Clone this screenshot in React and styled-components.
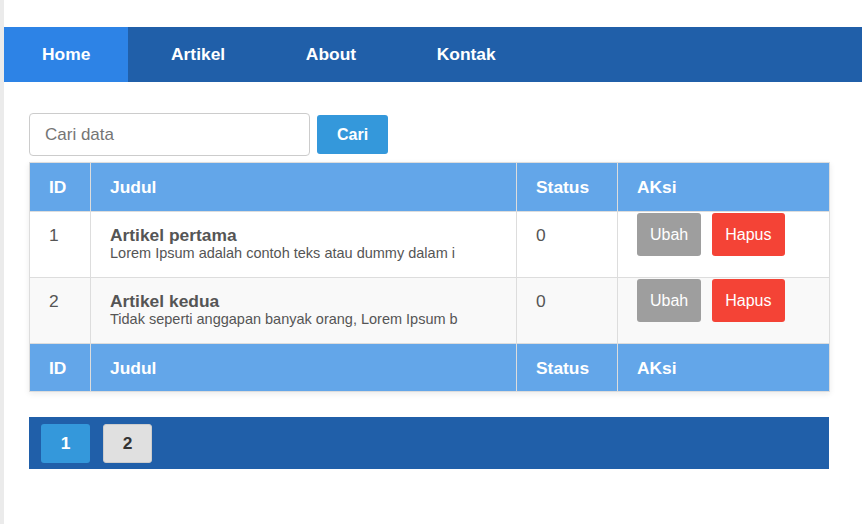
import React from "react";
import styled, { createGlobalStyle } from "styled-components";

const GlobalStyle = createGlobalStyle`
  html, body { margin: 0; padding: 0; background: #ffffff; }
  body { font-family: "Liberation Sans", Arial, sans-serif; }
  * { box-sizing: border-box; }
`;

const Page = styled.div`
  min-height: 524px;
  border-left: 4px solid #ebebeb;
  padding-top: 27px;
  background: #ffffff;
`;

const Nav = styled.nav`
  display: flex;
  gap: 4.7px;
  height: 55px;
  background: #205fa9;
`;

const NavLink = styled.a`
  display: flex;
  align-items: center;
  padding: 0 38px;
  color: #ffffff;
  font-weight: 700;
  font-size: 17.4px;
  text-decoration: none;
  background: ${(p) => (p.$active ? "#2d83e6" : "transparent")};
`;

const Content = styled.main`
  width: 825px;
  padding: 31px 0 0 25px;
`;

const SearchRow = styled.form`
  display: flex;
  align-items: center;
  gap: 7px;
  margin-bottom: 6px;
`;

const SearchInput = styled.input`
  width: 281px;
  height: 43px;
  padding: 0 15px;
  border: 1px solid #cccccc;
  border-radius: 4px;
  font-family: inherit;
  font-size: 17px;
  color: #333;
  outline: none;
  &::placeholder { color: #757575; }
`;

const SearchButton = styled.button`
  height: 39px;
  padding: 0 20px;
  border: none;
  border-radius: 3px;
  background: #3498db;
  color: #ffffff;
  font-family: inherit;
  font-weight: 700;
  font-size: 16px;
`;

const Table = styled.table`
  width: 800px;
  border-collapse: collapse;
  table-layout: fixed;
  border: 1px solid #dddddd;
  box-shadow: 0 2px 6px rgba(0, 0, 0, 0.08);
`;

const HeadCell = styled.th`
  width: ${(p) => p.$w}px;
  height: ${(p) => p.$h}px;
  padding: 0 19px;
  background: #63a6e9;
  color: #ffffff;
  font-size: 17.4px;
  font-weight: 700;
  line-height: 20px;
  text-align: left;
  vertical-align: middle;
  border: 1px solid #dddddd;
`;

const Row = styled.tr`
  background: ${(p) => (p.$striped ? "#f9f9f9" : "#ffffff")};
`;

const Cell = styled.td`
  padding: ${(p) => (p.$actions ? "1px 19px 0" : "13px 19px 16px")};
  vertical-align: top;
  border: 1px solid #dddddd;
  color: #555555;
  font-size: 17.4px;
  line-height: 20px;
`;

const Title = styled.div`
  font-weight: 700;
  font-size: 17.4px;
  line-height: 20px;
  color: #555555;
`;

const Desc = styled.div`
  font-size: 14.5px;
  line-height: 16px;
  color: #555555;
  white-space: nowrap;
`;

const Actions = styled.div`
  display: flex;
  gap: 11px;
`;

const ActionButton = styled.button`
  height: 43px;
  padding: 0 13px;
  border: none;
  border-radius: 3px;
  background: ${(p) => (p.$danger ? "#f44336" : "#9e9e9e")};
  color: #ffffff;
  font-family: inherit;
  font-size: 16px;
`;

const Pagination = styled.div`
  display: flex;
  gap: 13px;
  width: 800px;
  height: 52px;
  margin-top: 25px;
  padding: 7px 12px;
  background: #205fa9;
`;

const PageButton = styled.button`
  width: 49px;
  height: 39px;
  border: ${(p) => (p.$active ? "none" : "1px solid #cccccc")};
  border-radius: 3px;
  background: ${(p) => (p.$active ? "#3498db" : "#e0e0e0")};
  color: ${(p) => (p.$active ? "#ffffff" : "#333333")};
  font-family: inherit;
  font-weight: 700;
  font-size: 17.4px;
`;

const columns = [
  { label: "ID", w: 61 },
  { label: "Judul", w: 426 },
  { label: "Status", w: 101 },
  { label: "AKsi", w: 212 },
];

const rows = [
  {
    id: 1,
    title: "Artikel pertama",
    desc: "Lorem Ipsum adalah contoh teks atau dummy dalam i",
    status: 0,
  },
  {
    id: 2,
    title: "Artikel kedua",
    desc: "Tidak seperti anggapan banyak orang, Lorem Ipsum b",
    status: 0,
  },
];

const HeaderRow = ({ h }) => (
  <tr>
    {columns.map((c) => (
      <HeadCell key={c.label} $w={c.w} $h={h}>
        {c.label}
      </HeadCell>
    ))}
  </tr>
);

export default function App() {
  return (
    <>
      <GlobalStyle />
      <Page>
        <Nav>
          <NavLink $active href="#">Home</NavLink>
          <NavLink href="#">Artikel</NavLink>
          <NavLink href="#">About</NavLink>
          <NavLink href="#">Kontak</NavLink>
        </Nav>
        <Content>
          <SearchRow onSubmit={(e) => e.preventDefault()}>
            <SearchInput placeholder="Cari data" />
            <SearchButton type="submit">Cari</SearchButton>
          </SearchRow>
          <Table>
            <thead>
              <HeaderRow h={49} />
            </thead>
            <tbody>
              {rows.map((r, i) => (
                <Row key={r.id} $striped={i % 2 === 1}>
                  <Cell>{r.id}</Cell>
                  <Cell>
                    <Title>{r.title}</Title>
                    <Desc>{r.desc}</Desc>
                  </Cell>
                  <Cell>{r.status}</Cell>
                  <Cell $actions>
                    <Actions>
                      <ActionButton>Ubah</ActionButton>
                      <ActionButton $danger>Hapus</ActionButton>
                    </Actions>
                  </Cell>
                </Row>
              ))}
            </tbody>
            <tfoot>
              <HeaderRow h={48} />
            </tfoot>
          </Table>
          <Pagination>
            <PageButton $active>1</PageButton>
            <PageButton>2</PageButton>
          </Pagination>
        </Content>
      </Page>
    </>
  );
}
